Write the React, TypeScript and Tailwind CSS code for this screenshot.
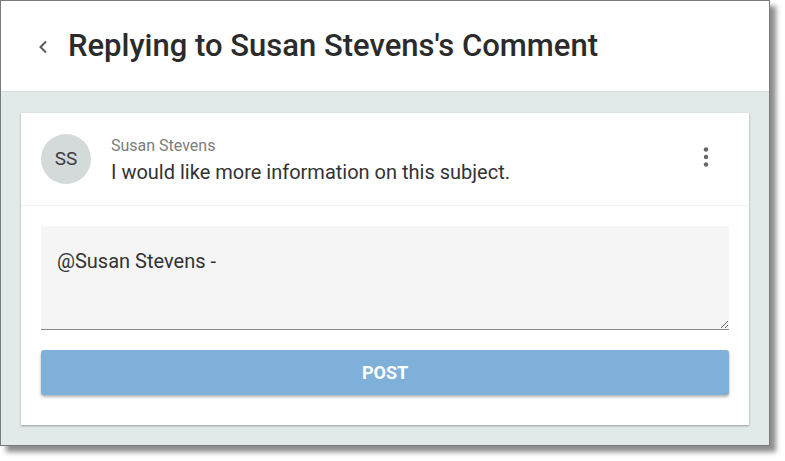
export default function App() {
  return (
    <div className="w-[785px] h-[461px] bg-white" style={{ fontFamily: "Roboto, 'Liberation Sans', sans-serif" }}>
      <div className="w-[770px] h-[446px] border border-[#7a7a7a] flex flex-col shadow-[6px_6px_5px_rgba(0,0,0,0.45)]">
        <header className="h-[91px] shrink-0 bg-white border-b border-[#d6dcdb] flex items-center pl-[36px]">
          <svg width="12" height="14" viewBox="0 0 12 14" className="mr-[19px] mt-[2px]">
            <polyline points="9,1.5 3.5,7 9,12.5" fill="none" stroke="#555b60" strokeWidth="2" />
          </svg>
          <h1 className="text-[31px] font-medium text-[#2b2b2b]">Replying to Susan Stevens's Comment</h1>
        </header>
        <main className="flex-1 bg-[#e2eae9] px-[20px] pt-[21px] pb-[20px]">
          <div className="bg-white h-full shadow-[0_1px_2px_rgba(0,0,0,0.35)] flex flex-col">
            <div className="h-[93px] flex items-center px-[20px] border-b border-[#f2f2f2]">
              <div className="w-[50px] h-[50px] rounded-full bg-[#d4dada] flex items-center justify-center text-[19px] text-[#3d3d3d]">SS</div>
              <div className="ml-[20px] flex-1 flex flex-col pt-[3px]">
                <span className="text-[16px] text-[#7d7d7d] leading-[20px]">Susan Stevens</span>
                <span className="text-[20px] text-[#333] leading-[26px] mt-[3px]">I would like more information on this subject.</span>
              </div>
              <svg width="6" height="20" viewBox="0 0 6 20" className="mr-[20px] mt-[-4px]">
                <circle cx="3" cy="2.5" r="2.2" fill="#666" />
                <circle cx="3" cy="10" r="2.2" fill="#666" />
                <circle cx="3" cy="17.5" r="2.2" fill="#666" />
              </svg>
            </div>
            <div className="px-[20px] pt-[20px] flex flex-col">
              <textarea
                defaultValue="@Susan Stevens -"
                className="h-[104px] bg-[#f5f5f5] border-b border-[#8a8a8a] px-[16px] pt-[22px] text-[20px] leading-[26px] text-[#333] outline-none"
              />
              <button className="mt-[20px] h-[45px] rounded-[3px] bg-[#7eb0d9] text-white font-bold text-[18px] shadow-[0_2px_3px_rgba(0,0,0,0.3)]">
                POST
              </button>
            </div>
          </div>
        </main>
      </div>
    </div>
  );
}
